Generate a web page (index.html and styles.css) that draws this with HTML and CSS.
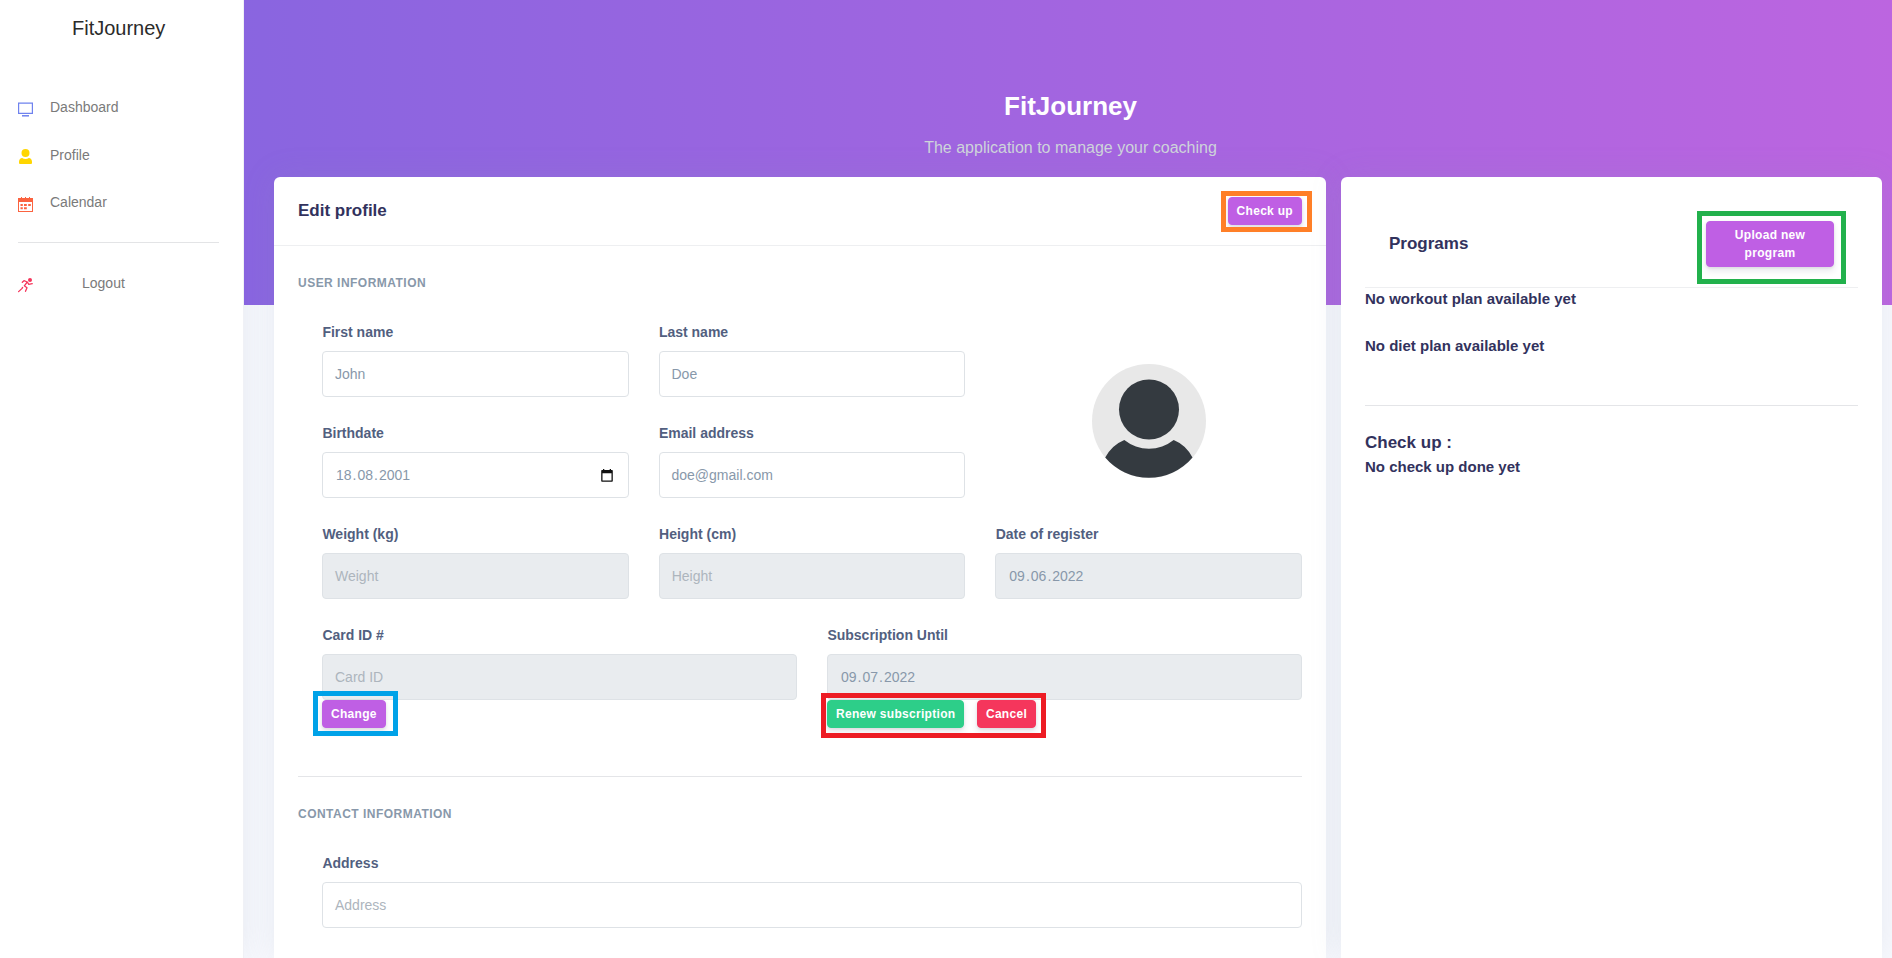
FILE: index.html
```html
<!DOCTYPE html>
<html lang="en">
<head>
<meta charset="utf-8">
<title>FitJourney</title>
<link rel="stylesheet" href="styles.css">
</head>
<body>
<div class="app">
  <nav class="sidebar">
    <div class="brand">FitJourney</div>
    <ul class="menu">
      <li class="menu-item">
        <svg class="icon" viewBox="0 0 15 15"><g fill="none" stroke="#6f82ee" stroke-width="1.200"><path d="M.6 1.100h13.800v10.300H.6z"/><path d="M4 13.800h7" stroke-width="1.500"/></g></svg>
        <span>Dashboard</span>
      </li>
      <li class="menu-item">
        <svg class="icon up" viewBox="0 0 15 15" fill="#ffd600"><circle cx="7.500" cy="4" r="4"/><path d="M1 15v-2.300C1 10.500 2.500 9 4.200 9c1 .6 2 .9 3.300.9s2.300-.3 3.300-.9C12.500 9 14 10.500 14 12.700V14q0 1-1 1H2q-1 0-1-1z"/></svg>
        <span>Profile</span>
      </li>
      <li class="menu-item">
        <svg class="icon up" viewBox="0 0 15 15" fill="#fb6340"><path fill-rule="evenodd" d="M0 1h3V0h1v1h3V0h1v1h3V0h1v1h3v14H0zM1 5v9h13V5z"/><path d="M2.500 7h2.300v2H2.500zM6 7h2.800v2H6zM10.200 7h2.600v2h-2.600zM2.500 10.200h2.300v2H2.500zM6 10.200h2.800v2H6z"/></svg>
        <span>Calendar</span>
      </li>
    </ul>
    <hr class="side-rule">
    <div class="menu-item logout">
      <svg class="icon" viewBox="0 0 15 15"><circle cx="12" cy="2" r="2" fill="#f5365c"/><path fill="none" stroke="#f5365c" stroke-width="1.300" stroke-linecap="round" stroke-linejoin="round" d="M4.300 4.300 6 2.700 9.300 4 6.300 7.800 9 9.800 7.500 13.300M9.300 4l1.500 2.300 3.400-.6M4.600 9.500 3.800 10.600.6 13.600"/></svg>
      <span>Logout</span>
    </div>
  </nav>

  <main class="main">
    <header class="hero">
      <h1 class="hero-title">FitJourney</h1>
      <p class="hero-text">The application to manage your coaching</p>
    </header>

    <div class="cards">
      <section class="card profile">
        <div class="card-head">
          <h3 class="title">Edit profile</h3>
          <span class="marked mark-checkup"><button class="btn">Check up</button></span>
        </div>
        <div class="card-body">
          <h6 class="section">User information</h6>
          <div class="fields">
            <div class="intro">
              <div class="row two">
                <div class="field"><label>First name</label><div class="input">John</div></div>
                <div class="field"><label>Last name</label><div class="input">Doe</div></div>
                <div class="field"><label>Birthdate</label><div class="input date"><span>18</span>.<span>08</span>.<span>2001</span>
                  <svg class="picker" viewBox="0 0 12 13"><path fill="#111" fill-rule="evenodd" d="M1 1h1V0h1.300v1h5.400V0H10v1h1q.8 0 .8.800V12q0 .8-.8.800H1q-.8 0-.8-.8V1.800Q.2 1 1 1zM1.500 4.200v7.300h9V4.200z"/></svg></div></div>
                <div class="field"><label>Email address</label><div class="input">doe@gmail.com</div></div>
              </div>
              <div class="avatar-cell">
                <svg class="avatar" viewBox="0 0 114 114"><circle cx="57" cy="57" r="57" fill="#e8e8e8"/><g fill="#343a40"><circle cx="57" cy="45.500" r="30"/><path d="M13.200 93.500Q20 81 32.300 76A39.500 39.500 0 0 0 81.700 76Q94 81 100.500 93.500A57 57 0 0 1 13.200 93.500z"/></g></svg>
              </div>
            </div>
            <div class="row three">
              <div class="field"><label>Weight (kg)</label><div class="input off hint">Weight</div></div>
              <div class="field"><label>Height (cm)</label><div class="input off hint">Height</div></div>
              <div class="field"><label>Date of register</label><div class="input off date"><span>09</span>.<span>06</span>.<span>2022</span></div></div>
            </div>
            <div class="row two">
              <div class="field"><label>Card ID #</label><div class="input off hint">Card ID</div>
                <span class="marked mark-change"><button class="btn">Change</button></span></div>
              <div class="field"><label>Subscription Until</label><div class="input off date"><span>09</span>.<span>07</span>.<span>2022</span></div>
                <span class="marked mark-sub"><button class="btn green">Renew subscription</button><button class="btn red">Cancel</button></span></div>
            </div>
          </div>
          <hr class="rule">
          <h6 class="section">Contact information</h6>
          <div class="fields">
            <div class="field"><label>Address</label><div class="input hint">Address</div></div>
          </div>
        </div>
      </section>

      <section class="card programs">
        <div class="programs-head">
          <h3 class="title">Programs</h3>
          <span class="marked mark-upload"><button class="btn tall">Upload new<br>program</button></span>
        </div>
        <h4 class="note">No workout plan available yet</h4>
        <h4 class="note second">No diet plan available yet</h4>
        <hr class="rule">
        <h3 class="title checkup">Check up :</h3>
        <h4 class="note last">No check up done yet</h4>
      </section>
    </div>
  </main>
</div>
</body>
</html>
```

FILE: styles.css
```css
* { box-sizing: border-box; }

body {
  margin: 0;
  height: 958px;
  overflow: hidden;
  background: #f8f9fe;
  font-family: "Liberation Sans", Arial, sans-serif;
  font-size: 16px;
  line-height: 1.5;
  color: #525f7f;
}

h1, h3, h4, h6, p, ul, hr { margin: 0; padding: 0; }
h1, h3, h4, h6 { font-weight: 700; }
hr { border: 0; }

.app { display: flex; height: 958px; }

/* Sidebar */
.sidebar {
  width: 244px;
  flex: none;
  background: #fff;
  border-right: 1px solid #f0f1f6;
  box-shadow: 0 0 32px rgba(136, 152, 170, .15);
}
.brand {
  margin: 13px 0 0;
  padding-left: 72px;
  font-size: 20px;
  line-height: 30px;
  color: #2b2b2b;
}
.menu { list-style: none; padding-top: 52px; }
.menu-item {
  display: flex;
  align-items: flex-start;
  gap: 17px;
  height: 47.6px;
  padding-left: 18px;
  font-size: 14px;
  line-height: 24px;
  color: #7a7a7a;
}
.icon { width: 15px; height: 15px; flex: none; margin-top: 7px; }
.icon.up { margin-top: 6.4px; }
.side-rule { width: 201px; height: 1px; margin: 4px 0 0 18px; background: #e3e4e6; }
.logout { margin-top: 28px; gap: 49px; }

/* Header */
.main { flex: 1; min-width: 0; position: relative; }
.hero {
  height: 305px;
  padding: 87px 0 0 5px;
  background: linear-gradient(87deg, #8965e0 0%, #bc65e0 100%);
  text-align: center;
}
.hero-title { font-size: 26px; line-height: 39px; color: #fff; }
.hero-text { margin-top: 9px; line-height: 26px; color: #ced4da; }

/* Cards */
.cards {
  display: flex;
  gap: 15px;
  height: 781px;
  margin-top: -128px;
  padding: 0 10px 0 30px;
}
.card {
  background: #fff;
  border-radius: 6px 6px 0 0;
  box-shadow: 0 0 32px rgba(136, 152, 170, .15);
}
.profile { width: 1052px; flex: none; }
.programs { flex: 1; padding: 24px 24px 0; }

.card-head {
  display: flex;
  align-items: flex-start;
  justify-content: space-between;
  height: 69px;
  padding: 20px 24px 0;
  border-bottom: 1px solid #eeeff1;
}
.title { font-size: 17px; line-height: 25px; color: #32325d; }
.card-head .title { margin-top: 1px; }
.card-body { padding: 24px 24px 0; }
.section {
  font-size: 12px;
  line-height: 26px;
  letter-spacing: .48px;
  text-transform: uppercase;
  color: #8898aa;
}
.fields { padding: 24px 0 0 24px; }
.intro { display: grid; grid-template-columns: 643px 1fr; column-gap: 30px; }
.row { display: grid; column-gap: 30px; }
.two { grid-template-columns: 1fr 1fr; }
.three { grid-template-columns: 1fr 1fr 1fr; }
.field { height: 101px; display: flex; flex-direction: column; align-items: flex-start; }
.field label {
  height: 23px;
  margin-bottom: 8px;
  padding-left: .4px;
  font-size: 14px;
  line-height: 24px;
  font-weight: 700;
}
.input {
  display: flex;
  align-items: center;
  width: 100%;
  height: 46px;
  flex: none;
  padding: 0 12px;
  border: 1px solid #dee2e6;
  border-radius: 4px;
  background: #fff;
  font-size: 14px;
  color: #8898aa;
}
.off { background: #e9ecef; }
.hint { color: #adb5bd; }
.date span { padding: 0 1px; }
.picker { width: 12px; height: 13px; margin-left: auto; margin-right: 3px; }
.avatar-cell { display: flex; justify-content: center; padding-top: 44px; }
.avatar { width: 114px; height: 114px; }

.rule { height: 1px; background: #e4e5e8; }
.profile .rule { margin: 52px 0 24px; }

/* Buttons */
.btn {
  height: 28px;
  padding: 4px 8px;
  border: 1px solid #bf5fe4;
  border-radius: 4px;
  background: #bf5fe4;
  box-shadow: 0 4px 6px rgba(50, 50, 93, .11), 0 1px 3px rgba(0, 0, 0, .08);
  font-family: inherit;
  font-size: 12px;
  line-height: 18px;
  font-weight: 700;
  letter-spacing: .3px;
  color: #fff;
  white-space: nowrap;
}
.green { background: #2dce89; border-color: #2dce89; }
.red { padding: 4px 7.5px; background: #f5365c; border-color: #f5365c; }
.tall { width: 128px; height: 46px; }

/* Coloured highlight boxes around the action buttons */
.marked { position: relative; display: flex; gap: 13px; }
.marked::after {
  content: "";
  position: absolute;
  border: 5px solid;
  pointer-events: none;
}
.mark-checkup::after { inset: -6px -10px -7px -7px; border-color: #ff7f27; }
.mark-change::after { inset: -9px -12px -8px -9px; border-color: #00a2e8; }
.mark-sub::after { inset: -7px -10px -10px -6px; border-color: #ed1c24; }
.mark-upload::after { inset: -10px -12px -17px -9px; border-color: #22b14c; }

/* Programs */
.programs-head {
  display: flex;
  align-items: flex-start;
  justify-content: space-between;
  height: 87px;
  padding: 20px 24px 0;
  border-bottom: 1px solid #eeeff1;
}
.programs-head .title { margin-top: 10px; }
.note { font-size: 15px; line-height: 22px; color: #32325d; }
.second { margin-top: 25px; }
.programs .rule { margin-top: 48px; }
.checkup { margin-top: 24px; }
.last { margin-top: 1px; }
```
